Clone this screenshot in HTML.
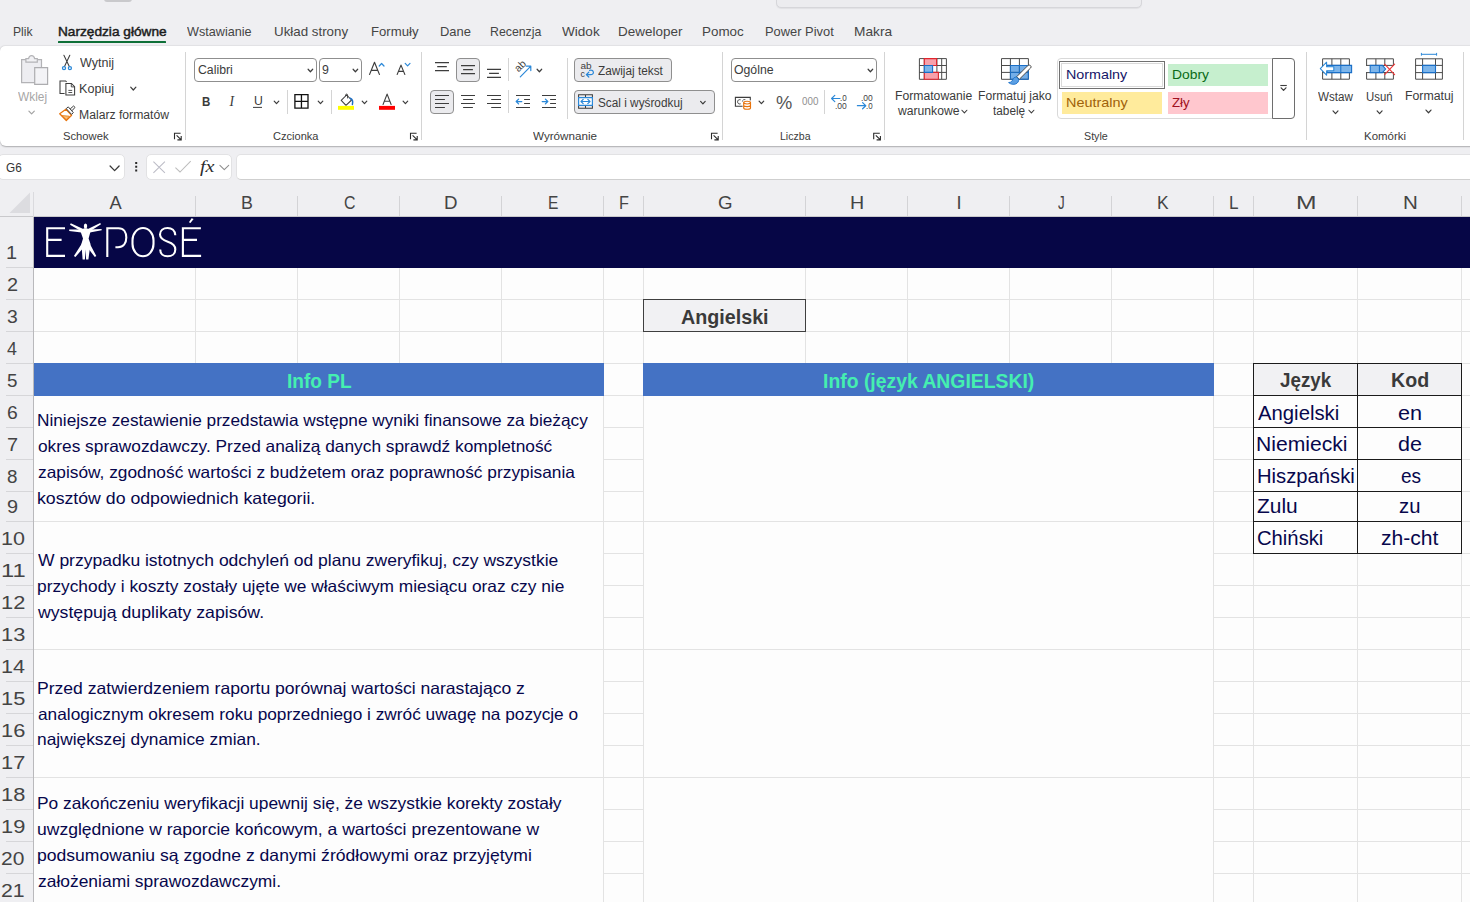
<!DOCTYPE html>
<html><head><meta charset="utf-8"><title>Excel</title>
<style>
html,body{margin:0;padding:0}
body{width:1470px;height:902px;overflow:hidden;position:relative;background:#efeff2;font-family:'Liberation Sans',sans-serif;}
#r{position:absolute;left:0;top:0;width:1470px;height:902px;overflow:hidden}
#r>div,#r>svg,#r>span{position:absolute}
.t{white-space:pre;transform-origin:0 0;display:block}
</style></head><body><div id="r">
<div style="left:104px;top:-2px;width:28px;height:3.5px;background:#c9c9cc;border-radius:0 0 3px 3px;"></div>
<div style="left:776px;top:-10.6px;width:366px;height:19px;background:#ececef;border:1px solid #d6d6da;border-radius:5px;box-sizing:border-box;box-shadow:0 1px 1px rgba(0,0,0,0.06);"></div>
<div style="left:58px;top:40.8px;width:108.4px;height:2.2px;background:#0f7038;border-radius:0.6px;"></div>
<div style="left:0px;top:46.4px;width:1480px;height:99.6px;background:#ffffff;border-radius:5px 0 0 6px;box-shadow:0 0.5px 1.5px rgba(0,0,0,0.28);"></div>
<div style="left:185.4px;top:51.5px;width:1px;height:88.0px;background:#d4d4d4;"></div>
<div style="left:421.4px;top:51.5px;width:1px;height:88.0px;background:#d4d4d4;"></div>
<div style="left:722.4px;top:51.5px;width:1px;height:88.0px;background:#d4d4d4;"></div>
<div style="left:884.4px;top:51.5px;width:1px;height:88.0px;background:#d4d4d4;"></div>
<div style="left:1306px;top:51.5px;width:1px;height:88.0px;background:#d4d4d4;"></div>
<div style="left:1463px;top:51.5px;width:1px;height:88.0px;background:#d4d4d4;"></div>
<div style="left:287.2px;top:90px;width:1px;height:23.599999999999994px;background:#d4d4d4;"></div>
<div style="left:331.2px;top:90px;width:1px;height:23.599999999999994px;background:#d4d4d4;"></div>
<div style="left:508px;top:58.3px;width:1px;height:23.200000000000003px;background:#d4d4d4;"></div>
<div style="left:508px;top:90.3px;width:1px;height:23.200000000000003px;background:#d4d4d4;"></div>
<div style="left:567.4px;top:57.7px;width:1px;height:61.099999999999994px;background:#d4d4d4;"></div>
<div style="left:824.3px;top:90.1px;width:1px;height:23.80000000000001px;background:#d4d4d4;"></div>
<div style="left:194.3px;top:58.2px;width:122.3px;height:23.4px;background:#fff;border:1px solid #8f8f8f;border-radius:4px;box-sizing:border-box;"></div>
<div style="left:319px;top:58.2px;width:42.5px;height:23.4px;background:#fff;border:1px solid #8f8f8f;border-radius:4px;box-sizing:border-box;"></div>
<div style="left:731px;top:58.3px;width:146px;height:23.3px;background:#fff;border:1px solid #8f8f8f;border-radius:4px;box-sizing:border-box;"></div>
<div style="left:456.2px;top:58.2px;width:23.6px;height:23.4px;background:#ebebee;border:1px solid #8f8f8f;border-radius:4px;box-sizing:border-box;"></div>
<div style="left:430px;top:90.2px;width:23.8px;height:23.4px;background:#ebebee;border:1px solid #8f8f8f;border-radius:4px;box-sizing:border-box;"></div>
<div style="left:574.3px;top:58.2px;width:98px;height:23.4px;background:#ebebee;border:1px solid #8f8f8f;border-radius:4px;box-sizing:border-box;"></div>
<div style="left:574.3px;top:90.2px;width:140.4px;height:23.4px;background:#ebebee;border:1px solid #8f8f8f;border-radius:4px;box-sizing:border-box;"></div>
<div style="left:1057px;top:58.3px;width:238.2px;height:61.2px;background:#fff;border:1px solid #d9d9d9;border-radius:4px;box-sizing:border-box;"></div>
<div style="left:1272.2px;top:58.3px;width:23px;height:61.2px;background:#fff;border:1px solid #6e6e6e;border-radius:0 4px 4px 0;box-sizing:border-box;"></div>
<div style="left:1059.3px;top:61.2px;width:105.8px;height:27.6px;background:#fff;border:1px solid #707070;box-sizing:border-box;box-shadow:inset 0 0 0 1px #fff, inset 0 0 0 2px #dadada;"></div>
<div style="left:1168px;top:64px;width:100px;height:22px;background:#c6efce;"></div>
<div style="left:1062px;top:92px;width:100px;height:22px;background:#ffeb9c;"></div>
<div style="left:1168px;top:92px;width:100px;height:22px;background:#ffc7ce;"></div>
<div style="left:-2px;top:154.4px;width:127.2px;height:25.2px;background:#fff;border:1px solid #e2e2e4;border-radius:5px;box-sizing:border-box;"></div>
<div style="left:146.2px;top:154.4px;width:85.6px;height:25.2px;background:#fff;border:1px solid #e2e2e4;border-radius:5px;box-sizing:border-box;"></div>
<div style="left:236.2px;top:154.4px;width:1245px;height:25.2px;background:#fff;border:1px solid #e2e2e4;border-radius:5px;box-sizing:border-box;border-bottom-color:#cfcfcf;"></div>
<div style="left:34px;top:217px;width:1436px;height:685px;background:#fdfdfd;"></div>
<div style="left:34px;top:217px;width:1436px;height:51px;background:#060646;"></div>
<div style="left:0px;top:216px;width:1470px;height:1px;background:#c9c9cc;"></div>
<div style="left:33px;top:192px;width:1px;height:25px;background:#dadade;"></div>
<div style="left:33px;top:217px;width:1px;height:685px;background:#b9b9bc;"></div>
<div style="left:195px;top:196px;width:1px;height:20px;background:#d3d3d6;"></div>
<div style="left:297px;top:196px;width:1px;height:20px;background:#d3d3d6;"></div>
<div style="left:399px;top:196px;width:1px;height:20px;background:#d3d3d6;"></div>
<div style="left:501px;top:196px;width:1px;height:20px;background:#d3d3d6;"></div>
<div style="left:603px;top:196px;width:1px;height:20px;background:#d3d3d6;"></div>
<div style="left:643px;top:196px;width:1px;height:20px;background:#d3d3d6;"></div>
<div style="left:805px;top:196px;width:1px;height:20px;background:#d3d3d6;"></div>
<div style="left:907px;top:196px;width:1px;height:20px;background:#d3d3d6;"></div>
<div style="left:1009px;top:196px;width:1px;height:20px;background:#d3d3d6;"></div>
<div style="left:1111px;top:196px;width:1px;height:20px;background:#d3d3d6;"></div>
<div style="left:1213px;top:196px;width:1px;height:20px;background:#d3d3d6;"></div>
<div style="left:1253px;top:196px;width:1px;height:20px;background:#d3d3d6;"></div>
<div style="left:1357px;top:196px;width:1px;height:20px;background:#d3d3d6;"></div>
<div style="left:1461px;top:196px;width:1px;height:20px;background:#d3d3d6;"></div>
<div style="left:6px;top:267px;width:27px;height:1px;background:#d6d6d9;"></div>
<div style="left:6px;top:299px;width:27px;height:1px;background:#d6d6d9;"></div>
<div style="left:6px;top:331px;width:27px;height:1px;background:#d6d6d9;"></div>
<div style="left:6px;top:363px;width:27px;height:1px;background:#d6d6d9;"></div>
<div style="left:6px;top:395px;width:27px;height:1px;background:#d6d6d9;"></div>
<div style="left:6px;top:427px;width:27px;height:1px;background:#d6d6d9;"></div>
<div style="left:6px;top:459px;width:27px;height:1px;background:#d6d6d9;"></div>
<div style="left:6px;top:491px;width:27px;height:1px;background:#d6d6d9;"></div>
<div style="left:6px;top:521px;width:27px;height:1px;background:#d6d6d9;"></div>
<div style="left:6px;top:553px;width:27px;height:1px;background:#d6d6d9;"></div>
<div style="left:6px;top:585px;width:27px;height:1px;background:#d6d6d9;"></div>
<div style="left:6px;top:617px;width:27px;height:1px;background:#d6d6d9;"></div>
<div style="left:6px;top:649px;width:27px;height:1px;background:#d6d6d9;"></div>
<div style="left:6px;top:681px;width:27px;height:1px;background:#d6d6d9;"></div>
<div style="left:6px;top:713px;width:27px;height:1px;background:#d6d6d9;"></div>
<div style="left:6px;top:745px;width:27px;height:1px;background:#d6d6d9;"></div>
<div style="left:6px;top:777px;width:27px;height:1px;background:#d6d6d9;"></div>
<div style="left:6px;top:809px;width:27px;height:1px;background:#d6d6d9;"></div>
<div style="left:6px;top:841px;width:27px;height:1px;background:#d6d6d9;"></div>
<div style="left:6px;top:873px;width:27px;height:1px;background:#d6d6d9;"></div>
<svg style="left:9px;top:192px" width="22" height="22" viewBox="0 0 22 22"><path d="M21 0.5V21H0.5Z" fill="#dcdce0"/></svg>
<div style="left:34px;top:299px;width:1436px;height:1px;background:#e3e3e3;"></div>
<div style="left:34px;top:331px;width:1436px;height:1px;background:#e3e3e3;"></div>
<div style="left:604px;top:363px;width:39px;height:1px;background:#e3e3e3;"></div>
<div style="left:604px;top:395px;width:39px;height:1px;background:#e3e3e3;"></div>
<div style="left:604px;top:427px;width:39px;height:1px;background:#e3e3e3;"></div>
<div style="left:604px;top:459px;width:39px;height:1px;background:#e3e3e3;"></div>
<div style="left:604px;top:491px;width:39px;height:1px;background:#e3e3e3;"></div>
<div style="left:604px;top:553px;width:39px;height:1px;background:#e3e3e3;"></div>
<div style="left:604px;top:585px;width:39px;height:1px;background:#e3e3e3;"></div>
<div style="left:604px;top:617px;width:39px;height:1px;background:#e3e3e3;"></div>
<div style="left:604px;top:681px;width:39px;height:1px;background:#e3e3e3;"></div>
<div style="left:604px;top:713px;width:39px;height:1px;background:#e3e3e3;"></div>
<div style="left:604px;top:745px;width:39px;height:1px;background:#e3e3e3;"></div>
<div style="left:604px;top:809px;width:39px;height:1px;background:#e3e3e3;"></div>
<div style="left:604px;top:841px;width:39px;height:1px;background:#e3e3e3;"></div>
<div style="left:604px;top:873px;width:39px;height:1px;background:#e3e3e3;"></div>
<div style="left:1214px;top:363px;width:39px;height:1px;background:#e3e3e3;"></div>
<div style="left:1462px;top:363px;width:8px;height:1px;background:#e3e3e3;"></div>
<div style="left:1214px;top:395px;width:39px;height:1px;background:#e3e3e3;"></div>
<div style="left:1462px;top:395px;width:8px;height:1px;background:#e3e3e3;"></div>
<div style="left:1214px;top:427px;width:39px;height:1px;background:#e3e3e3;"></div>
<div style="left:1462px;top:427px;width:8px;height:1px;background:#e3e3e3;"></div>
<div style="left:1214px;top:459px;width:39px;height:1px;background:#e3e3e3;"></div>
<div style="left:1462px;top:459px;width:8px;height:1px;background:#e3e3e3;"></div>
<div style="left:1214px;top:491px;width:39px;height:1px;background:#e3e3e3;"></div>
<div style="left:1462px;top:491px;width:8px;height:1px;background:#e3e3e3;"></div>
<div style="left:1214px;top:553px;width:39px;height:1px;background:#e3e3e3;"></div>
<div style="left:1462px;top:553px;width:8px;height:1px;background:#e3e3e3;"></div>
<div style="left:1214px;top:585px;width:256px;height:1px;background:#e3e3e3;"></div>
<div style="left:1214px;top:617px;width:256px;height:1px;background:#e3e3e3;"></div>
<div style="left:1214px;top:681px;width:256px;height:1px;background:#e3e3e3;"></div>
<div style="left:1214px;top:713px;width:256px;height:1px;background:#e3e3e3;"></div>
<div style="left:1214px;top:745px;width:256px;height:1px;background:#e3e3e3;"></div>
<div style="left:1214px;top:809px;width:256px;height:1px;background:#e3e3e3;"></div>
<div style="left:1214px;top:841px;width:256px;height:1px;background:#e3e3e3;"></div>
<div style="left:1214px;top:873px;width:256px;height:1px;background:#e3e3e3;"></div>
<div style="left:34px;top:521px;width:1436px;height:1px;background:#e3e3e3;"></div>
<div style="left:34px;top:649px;width:1436px;height:1px;background:#e3e3e3;"></div>
<div style="left:34px;top:777px;width:1436px;height:1px;background:#e3e3e3;"></div>
<div style="left:195px;top:268px;width:1px;height:95px;background:#e3e3e3;"></div>
<div style="left:297px;top:268px;width:1px;height:95px;background:#e3e3e3;"></div>
<div style="left:399px;top:268px;width:1px;height:95px;background:#e3e3e3;"></div>
<div style="left:501px;top:268px;width:1px;height:95px;background:#e3e3e3;"></div>
<div style="left:603px;top:268px;width:1px;height:95px;background:#e3e3e3;"></div>
<div style="left:643px;top:268px;width:1px;height:95px;background:#e3e3e3;"></div>
<div style="left:805px;top:268px;width:1px;height:95px;background:#e3e3e3;"></div>
<div style="left:907px;top:268px;width:1px;height:95px;background:#e3e3e3;"></div>
<div style="left:1009px;top:268px;width:1px;height:95px;background:#e3e3e3;"></div>
<div style="left:1111px;top:268px;width:1px;height:95px;background:#e3e3e3;"></div>
<div style="left:1213px;top:268px;width:1px;height:95px;background:#e3e3e3;"></div>
<div style="left:1253px;top:268px;width:1px;height:95px;background:#e3e3e3;"></div>
<div style="left:1357px;top:268px;width:1px;height:95px;background:#e3e3e3;"></div>
<div style="left:1461px;top:268px;width:1px;height:95px;background:#e3e3e3;"></div>
<div style="left:603px;top:396px;width:1px;height:506px;background:#e3e3e3;"></div>
<div style="left:643px;top:396px;width:1px;height:506px;background:#e3e3e3;"></div>
<div style="left:1213px;top:396px;width:1px;height:506px;background:#e3e3e3;"></div>
<div style="left:1253px;top:554px;width:1px;height:348px;background:#e3e3e3;"></div>
<div style="left:1357px;top:554px;width:1px;height:348px;background:#e3e3e3;"></div>
<div style="left:1461px;top:554px;width:1px;height:348px;background:#e3e3e3;"></div>
<div style="left:34px;top:363px;width:570px;height:33px;background:#4472c4;"></div>
<div style="left:643px;top:363px;width:571px;height:33px;background:#4472c4;"></div>
<div style="left:643px;top:299px;width:163px;height:33px;background:#f1f1f3;border:1px solid #3f3f3f;box-sizing:border-box;"></div>
<div style="left:1253px;top:363px;width:209px;height:33px;background:#f1f1f3;"></div>
<div style="left:1253px;top:363px;width:209px;height:1px;background:#1b1b1b;"></div>
<div style="left:1253px;top:395px;width:209px;height:1px;background:#1b1b1b;"></div>
<div style="left:1253px;top:427px;width:209px;height:1px;background:#1b1b1b;"></div>
<div style="left:1253px;top:459px;width:209px;height:1px;background:#1b1b1b;"></div>
<div style="left:1253px;top:491px;width:209px;height:1px;background:#1b1b1b;"></div>
<div style="left:1253px;top:521px;width:209px;height:1px;background:#1b1b1b;"></div>
<div style="left:1253px;top:553px;width:209px;height:1px;background:#1b1b1b;"></div>
<div style="left:1253px;top:363px;width:1px;height:191px;background:#1b1b1b;"></div>
<div style="left:1357px;top:363px;width:1px;height:191px;background:#1b1b1b;"></div>
<div style="left:1461px;top:363px;width:1px;height:191px;background:#1b1b1b;"></div>
<!-- EXPOSE logo -->
<svg style="left:34px;top:217px" width="200" height="51" viewBox="34 217 200 51" fill="none" stroke="#fff" stroke-width="2.1" stroke-linecap="butt" stroke-linejoin="miter">
<path d="M65 228.2H47.2V255.9H65M47.2 239.9H61.6"/>
<g stroke="none" fill="#fff">
<ellipse cx="85.5" cy="225.9" rx="1.7" ry="2.5"/>
<path d="M80.2 230.4L84.2 228.3L86.8 228.3L90.8 230.4L88.6 238.4L90.5 244L88.4 259.4L86.1 259.4L85.5 249.5L84.9 259.4L82.6 259.4L81.4 244L83 238.4Z"/>
<path d="M81.4 232.5L69.2 230.9L69.2 229.5L81.4 229.6ZM89.8 232.5L101.7 230.3L101.6 228.9L89.8 229.6Z"/>
<path d="M81.6 231.6L70 224.7L70.8 223.3L83.8 229.2ZM89.6 231.6L101 224.3L100.2 223L87.4 229.2Z"/>
<path d="M82.2 243L73.9 256L75.4 257L84.6 246.5ZM89.4 243L96.3 256L94.8 257L86.8 246.5Z"/>
</g>
<path d="M107.3 227.2V257M107.3 228.2H118.5C124 228.2 126.3 232.6 126.3 237.6C126.3 242.8 123.5 247.2 118 247.2H115.4"/>
<rect x="132.5" y="228" width="21" height="28.2" rx="10.5" ry="12.2"/>
<path d="M175.3 235.2C175 230.6 171.8 228 167.6 228C163.2 228 160 230.6 160 234.6C160 238.6 163 240.2 167.8 241.8C172.6 243.4 175.3 245.2 175.3 249.4C175.3 253.6 172 256.3 167.6 256.3C163.2 256.3 160.2 253.6 160.2 249.4"/>
<path d="M200.9 228.2H182.9V255.9H201.1M182.9 239.9H197"/>
<path d="M188.9 222.3L191.6 218.3L193.6 219.1L190.5 223Z" fill="#fff" stroke="none"/>
</svg>
<svg style="left:0;top:0" width="1470" height="190" viewBox="0 0 1470 190" fill="none">
<path d="M21.6 59.6H41.5V82.6H21.6Z" fill="#ededf1" stroke="#b3b3b6" stroke-width="1.2"/>
<path d="M25.9 62.2V58.6H28.6C28.9 56.6 30 55.6 31.6 55.6C33.2 55.6 34.3 56.6 34.6 58.6H37.3V62.2Z" fill="#f1f1f4" stroke="#b3b3b6" stroke-width="1.2"/>
<path d="M34.7 67.6H47.6V84.3H34.7Z" fill="#f3f3f6" stroke="#adadb0" stroke-width="1.2"/>
<path d="M28.90 111.10L31.60 113.90L34.30 111.10" stroke="#a3a3a3" stroke-width="1.2" fill="none" stroke-linecap="round" stroke-linejoin="round"/>
<path d="M63.9 55.2L69.2 66.2M69.8 55.2L64.6 66.2" stroke="#3d3d3d" stroke-width="1.05" stroke-linecap="round"/>
<circle cx="64" cy="68.1" r="1.55" stroke="#2b88d8" stroke-width="1.25"/><circle cx="69.9" cy="68.1" r="1.55" stroke="#2b88d8" stroke-width="1.25"/>
<path d="M64.6 93.4H60V80.9H65.6L66.6 81.9" stroke="#3d3d3d" stroke-width="1.05"/>
<path d="M65.9 83.4H71.4L74.6 86.7V95H65.9Z" stroke="#3d3d3d" stroke-width="1.05" fill="#fff"/>
<path d="M71.3 83.6V86.9H74.5" stroke="#3d3d3d" stroke-width="0.9"/>
<path d="M68.40 90.40H72.20M68.40 92.50H72.20" stroke="#3d3d3d" stroke-width="0.9" fill="none" stroke-linecap="butt"/>
<path d="M130.70 87.20L133.30 90.00L135.90 87.20" stroke="#3d3d3d" stroke-width="1.2" fill="none" stroke-linecap="round" stroke-linejoin="round"/>
<path d="M59.7 113.7L65.9 109.3L71.6 115.2L66.3 120.5Z" fill="#fff" stroke="#e8730c" stroke-width="1.25" stroke-linejoin="round"/>
<path d="M62.2 115.6L69.4 116.2L66.3 119.6Z" fill="#f7c27c" stroke="#e8730c" stroke-width="0.8" stroke-linejoin="round"/>
<path d="M66.2 108.6L68.3 106.9L73.3 112.6L71.6 114.4Z" fill="#fff" stroke="#3d3d3d" stroke-width="1"/>
<path d="M70.2 108.9L73.6 106L75 107.4L71.9 110.8Z" fill="#fff" stroke="#3d3d3d" stroke-width="1"/>
<path d="M180.60 133.20H174.50V139.30" stroke="#2a2a2a" stroke-width="1.1" fill="none"/>
<path d="M176.60 135.30L181.00 139.70M181.20 136.10V139.90H177.40" stroke="#2a2a2a" stroke-width="1.1" fill="none"/>
<path d="M308.10 69.25L310.40 71.75L312.70 69.25" stroke="#3d3d3d" stroke-width="1.2" fill="none" stroke-linecap="round" stroke-linejoin="round"/>
<path d="M353.10 69.25L355.40 71.75L357.70 69.25" stroke="#3d3d3d" stroke-width="1.2" fill="none" stroke-linecap="round" stroke-linejoin="round"/>
<path d="M369.4 74.9L374.5 62.3L379.6 74.9M371.3 70.4H377.7" stroke="#3d3d3d" stroke-width="1.15" stroke-linejoin="round"/>
<path d="M379.2 66L381.6 63.5L384 66" stroke="#2b88d8" stroke-width="1.2" stroke-linecap="round" stroke-linejoin="round"/>
<path d="M397 74.9L401 65.1L405 74.9M398.5 71.4H403.5" stroke="#3d3d3d" stroke-width="1.15" stroke-linejoin="round"/>
<path d="M405.2 63.4L407.6 65.9L410 63.4" stroke="#2b88d8" stroke-width="1.2" stroke-linecap="round" stroke-linejoin="round"/>
<path d="M253.00 107.40H262.00" stroke="#3d3d3d" stroke-width="1.0" fill="none" stroke-linecap="butt"/>
<path d="M274.20 101.15L276.50 103.65L278.80 101.15" stroke="#3d3d3d" stroke-width="1.2" fill="none" stroke-linecap="round" stroke-linejoin="round"/>
<path d="M294.9 94.7H308V108.1H294.9ZM301.45 94.7V108.1M294.9 101.4H308" stroke="#111" stroke-width="1.3"/>
<path d="M318.20 101.15L320.50 103.65L322.80 101.15" stroke="#3d3d3d" stroke-width="1.2" fill="none" stroke-linecap="round" stroke-linejoin="round"/>
<path d="M341.2 100.4L346.6 95L351.6 100L346 105.3Z" stroke="#3d3d3d" stroke-width="1.05" stroke-linejoin="round" fill="#fff"/>
<path d="M345.6 96.2V95C345.6 93.8 347.6 93.8 347.6 95V98.4" stroke="#3d3d3d" stroke-width="0.95"/>
<path d="M350.2 98.2C352.4 98.9 353 101.6 352.4 104.4" stroke="#1f6fc4" stroke-width="1.5" stroke-linecap="round"/>
<rect x="338" y="105.9" width="16" height="3.9" fill="#ffff00"/>
<path d="M362.20 101.15L364.50 103.65L366.80 101.15" stroke="#3d3d3d" stroke-width="1.2" fill="none" stroke-linecap="round" stroke-linejoin="round"/>
<path d="M382.9 104.9L387.1 94.1L391.3 104.9M384.4 101.2H389.8" stroke="#3d3d3d" stroke-width="1.15" stroke-linejoin="round"/>
<rect x="379" y="105.9" width="16" height="3.9" fill="#ff0000"/>
<path d="M403.10 101.15L405.40 103.65L407.70 101.15" stroke="#3d3d3d" stroke-width="1.2" fill="none" stroke-linecap="round" stroke-linejoin="round"/>
<path d="M416.60 133.20H410.50V139.30" stroke="#2a2a2a" stroke-width="1.1" fill="none"/>
<path d="M412.60 135.30L417.00 139.70M417.20 136.10V139.90H413.40" stroke="#2a2a2a" stroke-width="1.1" fill="none"/>
<path d="M435.00 62.60H449.00M437.20 66.60H446.80M435.00 70.60H449.00" stroke="#3d3d3d" stroke-width="1.15" fill="none" stroke-linecap="butt"/>
<path d="M461.00 65.60H475.00M463.10 69.60H472.90M461.00 73.60H475.00" stroke="#3d3d3d" stroke-width="1.15" fill="none" stroke-linecap="butt"/>
<path d="M487.00 69.30H501.00M489.10 73.30H498.90M487.00 77.30H501.00" stroke="#3d3d3d" stroke-width="1.15" fill="none" stroke-linecap="butt"/>
<path d="M435.00 95.50H449.00M435.00 99.50H444.90M435.00 103.50H449.00M435.00 107.50H444.90" stroke="#3d3d3d" stroke-width="1.15" fill="none" stroke-linecap="butt"/>
<path d="M461.00 95.50H475.00M463.10 99.50H472.90M461.00 103.50H475.00M463.10 107.50H472.90" stroke="#3d3d3d" stroke-width="1.15" fill="none" stroke-linecap="butt"/>
<path d="M487.00 95.50H501.00M491.20 99.50H501.00M487.00 103.50H501.00M491.20 107.50H501.00" stroke="#3d3d3d" stroke-width="1.15" fill="none" stroke-linecap="butt"/>
<text transform="translate(518.6 72.6) rotate(-45)" font-family="'Liberation Sans',sans-serif" font-size="10.6" fill="#3d3d3d" textLength="11.4" lengthAdjust="spacingAndGlyphs">ab</text>
<path d="M520.3 76.9L530.6 66.4M526.4 66.2H530.8V70.6" stroke="#2b88d8" stroke-width="1.2" stroke-linecap="round" stroke-linejoin="round"/>
<path d="M537.10 69.25L539.40 71.75L541.70 69.25" stroke="#3d3d3d" stroke-width="1.2" fill="none" stroke-linecap="round" stroke-linejoin="round"/>
<path d="M516.00 95.50H530.00M524.10 99.50H530.00M524.10 103.50H530.00M516.00 107.50H530.00" stroke="#3d3d3d" stroke-width="1.15" fill="none" stroke-linecap="butt"/>
<path d="M521.8 101.5H516.3M518.6 99.1L516.2 101.5L518.6 103.9" stroke="#2b88d8" stroke-width="1.25" stroke-linecap="round" stroke-linejoin="round"/>
<path d="M542.00 95.50H556.00M550.10 99.50H556.00M550.10 103.50H556.00M542.00 107.50H556.00" stroke="#3d3d3d" stroke-width="1.15" fill="none" stroke-linecap="butt"/>
<path d="M542.2 101.5H547.7M545.4 99.1L547.8 101.5L545.4 103.9" stroke="#2b88d8" stroke-width="1.25" stroke-linecap="round" stroke-linejoin="round"/>
<text x="580.4" y="69.4" font-family="'Liberation Sans',sans-serif" font-size="8.8" fill="#3d3d3d" textLength="11.2" lengthAdjust="spacingAndGlyphs">ab</text>
<text x="580.4" y="76.5" font-family="'Liberation Sans',sans-serif" font-size="8.8" fill="#3d3d3d">c</text>
<path d="M589.6 70.3C594.2 69.6 594.8 74.6 590.6 74.6H586.4M588.8 72.2L586.3 74.6L588.8 77" stroke="#2b88d8" stroke-width="1.2" stroke-linecap="round" stroke-linejoin="round"/>
<path d="M578.6 94.8H592.4V108.2H578.6ZM585.5 94.8V97.6M585.5 105.4V108.2" stroke="#3d3d3d" stroke-width="1.05"/>
<path d="M578.6 97.7H592.4V105.3H578.6Z" stroke="#2b88d8" stroke-width="1.2" fill="#fff"/>
<path d="M581 101.5H590M583.2 99.3L581 101.5L583.2 103.7M587.8 99.3L590 101.5L587.8 103.7" stroke="#2b88d8" stroke-width="1.2" stroke-linecap="round" stroke-linejoin="round"/>
<path d="M700.60 101.35L702.90 103.85L705.20 101.35" stroke="#3d3d3d" stroke-width="1.2" fill="none" stroke-linecap="round" stroke-linejoin="round"/>
<path d="M717.60 133.20H711.50V139.30" stroke="#2a2a2a" stroke-width="1.1" fill="none"/>
<path d="M713.60 135.30L718.00 139.70M718.20 136.10V139.90H714.40" stroke="#2a2a2a" stroke-width="1.1" fill="none"/>
<path d="M868.10 69.25L870.40 71.75L872.70 69.25" stroke="#3d3d3d" stroke-width="1.2" fill="none" stroke-linecap="round" stroke-linejoin="round"/>
<path d="M735.4 97.4H750.3V106.2H735.4Z" stroke="#3d3d3d" stroke-width="1.1"/>
<path d="M740.6 99.8C738.6 99.2 737.6 100.4 737.6 101.8C737.6 103.2 738.6 104.4 740.6 103.8M745.4 99.8C743.4 99.2 742.4 100.4 742.4 101.8" stroke="#3d3d3d" stroke-width="0.95"/>
<rect x="742.6" y="100.4" width="9" height="9.6" fill="#fff"/>
<path d="M743.7 102.6V108C743.7 109.7 750.5 109.7 750.5 108V102.6M743.7 105.3C743.7 107 750.5 107 750.5 105.3" stroke="#e8730c" stroke-width="1.15"/>
<ellipse cx="747.1" cy="102.6" rx="3.4" ry="1.35" stroke="#e8730c" stroke-width="1.15" fill="#fff"/>
<path d="M759.10 101.15L761.40 103.65L763.70 101.15" stroke="#3d3d3d" stroke-width="1.2" fill="none" stroke-linecap="round" stroke-linejoin="round"/>
<path d="M840 98.5H831.6M834.8 95.4L831.6 98.5L834.8 101.6" stroke="#2b88d8" stroke-width="1.2" stroke-linecap="round" stroke-linejoin="round"/>
<path d="M857.4 105.7H865.8M862.6 102.6L865.8 105.7L862.6 108.8" stroke="#2b88d8" stroke-width="1.2" stroke-linecap="round" stroke-linejoin="round"/>
<path d="M879.80 133.20H873.70V139.30" stroke="#2a2a2a" stroke-width="1.1" fill="none"/>
<path d="M875.80 135.30L880.20 139.70M880.40 136.10V139.90H876.60" stroke="#2a2a2a" stroke-width="1.1" fill="none"/>
<path d="M919.4 58.6H946.4V79.3H919.4ZM919.4 65.5H946.4M919.4 72.4H946.4M924.3 58.6V79.3M936.9 58.6V79.3M941.7 58.6V79.3" stroke="#4a4a4a" stroke-width="1"/>
<path d="M924.3 58.6H936.6V65.5H924.3Z" fill="#f7a1ab" stroke="#e0252d" stroke-width="1.1"/>
<path d="M924.3 72.4H938.4V79.3H924.3Z" fill="#f7a1ab" stroke="#e0252d" stroke-width="1.1"/>
<path d="M924.3 65.5H932.6V72.4H924.3Z" fill="#7db5ea" stroke="#1a6fc8" stroke-width="1.1"/>
<path d="M961.90 110.25L964.40 112.95L966.90 110.25" stroke="#3d3d3d" stroke-width="1.1" fill="none" stroke-linecap="round" stroke-linejoin="round"/>
<path d="M1010.4 65.5H1028.4V79.3H1010.4Z" fill="#74aee8"/>
<path d="M1001.5 58.6H1028.4V79.3H1001.5ZM1001.5 65.5H1028.4M1001.5 72.4H1028.4M1010.4 58.6V79.3M1019.4 58.6V79.3" stroke="#4a4a4a" stroke-width="1"/>
<path d="M1010.4 65.5H1028.4V79.3H1010.4ZM1019.4 65.5V79.3M1010.4 72.4H1028.4" stroke="#1a6fc8" stroke-width="1" fill="none"/>
<path d="M1029.6 65.2C1031 65.6 1031.6 66.8 1030.6 68L1019.4 79.2L1016.6 76.8L1027.6 65.8C1028.2 65.2 1029 65 1029.6 65.2Z" fill="#fff" stroke="#4a4a4a" stroke-width="1"/>
<path d="M1008.6 82.6C1011.6 82.4 1012.4 80.6 1013.2 78.8C1014.2 76.8 1016.4 76.6 1017.8 78C1019.2 79.6 1018.8 81.8 1017 83.2C1014.6 85 1011 84.6 1008.6 82.6Z" fill="#5b9fe3" stroke="#1a6fc8" stroke-width="0.9"/>
<path d="M1028.90 110.25L1031.40 112.95L1033.90 110.25" stroke="#3d3d3d" stroke-width="1.1" fill="none" stroke-linecap="round" stroke-linejoin="round"/>
<path d="M1280.30 85.50H1286.80" stroke="#3d3d3d" stroke-width="1.1" fill="none" stroke-linecap="butt"/>
<path d="M1281.15 87.80L1283.55 90.40L1285.95 87.80" stroke="#3d3d3d" stroke-width="1.2" fill="none" stroke-linecap="round" stroke-linejoin="round"/>
<path d="M1322.6 58.8H1349.4V79.2H1322.6ZM1331.9 58.8V79.2M1340.8 58.8V79.2M1322.6 65.4H1349.4M1322.6 72.6H1349.4" stroke="#4a4a4a" stroke-width="1"/>
<path d="M1327 65.4H1351.6V72.6H1327Z" fill="#7db5ea" stroke="#1a6fc8" stroke-width="1.1"/>
<path d="M1340.8 65.4V72.6" stroke="#1a6fc8" stroke-width="1"/>
<path d="M1320.3 68.7L1326.6 62.2V66.8H1333.8V70.8H1326.6V75.2Z" fill="#fff" stroke="#2b88d8" stroke-width="1.05" stroke-linejoin="round"/>
<path d="M1333.00 110.95L1335.50 113.65L1338.00 110.95" stroke="#3d3d3d" stroke-width="1.2" fill="none" stroke-linecap="round" stroke-linejoin="round"/>
<path d="M1366.6 58.8H1393.4V79.2H1366.6ZM1375.9 58.8V79.2M1384.8 58.8V79.2M1366.6 65.4H1393.4M1366.6 72.6H1393.4" stroke="#4a4a4a" stroke-width="1"/>
<rect x="1366" y="66" width="30" height="6" fill="#fff"/>
<path d="M1370.2 65.4H1382.4L1385.6 69L1382.4 72.6H1370.2Z" fill="#7db5ea" stroke="#1a6fc8" stroke-width="1.1"/>
<path d="M1379.4 65.4V72.6" stroke="#1a6fc8" stroke-width="1"/>
<path d="M1384.6 64.2L1394.6 74.6M1394.6 64.2L1384.6 74.6" stroke="#f03a3a" stroke-width="1.2" stroke-linecap="round"/>
<path d="M1377.10 110.95L1379.60 113.65L1382.10 110.95" stroke="#3d3d3d" stroke-width="1.2" fill="none" stroke-linecap="round" stroke-linejoin="round"/>
<path d="M1415.6 58.8H1442.4V79.2H1415.6ZM1422.6 58.8V79.2M1435.5 58.8V79.2M1415.6 65.4H1442.4M1415.6 72.6H1442.4" stroke="#4a4a4a" stroke-width="1"/>
<path d="M1422.6 65.4H1435.5V72.6H1422.6Z" fill="#7db5ea" stroke="#1a6fc8" stroke-width="1.1"/>
<path d="M1421.4 54.3H1436.6M1421.4 52.9V55.7M1436.6 52.9V55.7" stroke="#2b88d8" stroke-width="1"/>
<path d="M1426.00 110.05L1428.50 112.75L1431.00 110.05" stroke="#3d3d3d" stroke-width="1.2" fill="none" stroke-linecap="round" stroke-linejoin="round"/>
<path d="M110.10 166.00L114.60 170.60L119.10 166.00" stroke="#3a3a3a" stroke-width="1.3" fill="none" stroke-linecap="round" stroke-linejoin="round"/>
<path d="M135.2 162.1h2v2h-2zM135.2 165.8h2v2h-2zM135.2 169.5h2v2h-2z" fill="#2a2a2a"/>
<path d="M153.4 161.6L164.9 172.8M164.9 161.6L153.4 172.8" stroke="#bcbcc6" stroke-width="1.05"/>
<path d="M175.4 167.6L180 172L190.7 161.2" stroke="#bdbdbd" stroke-width="1.05"/>
<path d="M219.90 165.30L224.30 169.70L228.70 165.30" stroke="#8e8e8e" stroke-width="1.05" fill="none" stroke-linecap="round" stroke-linejoin="round"/>
</svg>
<span class="t" style="left:13.03px;top:26.00px;font-size:12.6px;line-height:12.6px;color:#454545;transform:scaleX(0.9662);">Plik</span>
<span class="t" style="left:58.19px;top:26.00px;font-size:12.6px;line-height:12.6px;color:#1c1c1c;transform:scaleX(1.0848);-webkit-text-stroke:0.45px #1c1c1c;">Narzędzia główne</span>
<span class="t" style="left:187.40px;top:26.00px;font-size:12.6px;line-height:12.6px;color:#454545;transform:scaleX(1.0039);">Wstawianie</span>
<span class="t" style="left:274.34px;top:26.00px;font-size:12.6px;line-height:12.6px;color:#454545;transform:scaleX(1.0589);">Układ strony</span>
<span class="t" style="left:371.36px;top:26.00px;font-size:12.6px;line-height:12.6px;color:#454545;transform:scaleX(1.0441);">Formuły</span>
<span class="t" style="left:439.57px;top:26.00px;font-size:12.6px;line-height:12.6px;color:#454545;transform:scaleX(1.0281);">Dane</span>
<span class="t" style="left:489.82px;top:26.00px;font-size:12.6px;line-height:12.6px;color:#454545;transform:scaleX(0.9786);">Recenzja</span>
<span class="t" style="left:562.30px;top:26.00px;font-size:12.6px;line-height:12.6px;color:#454545;transform:scaleX(1.0771);">Widok</span>
<span class="t" style="left:618.13px;top:26.00px;font-size:12.6px;line-height:12.6px;color:#454545;transform:scaleX(1.0695);">Deweloper</span>
<span class="t" style="left:702.44px;top:26.00px;font-size:12.6px;line-height:12.6px;color:#454545;transform:scaleX(1.0649);">Pomoc</span>
<span class="t" style="left:764.68px;top:26.00px;font-size:12.6px;line-height:12.6px;color:#454545;transform:scaleX(1.0227);">Power Pivot</span>
<span class="t" style="left:854.11px;top:26.00px;font-size:12.6px;line-height:12.6px;color:#454545;transform:scaleX(1.0882);">Makra</span>
<span class="t" style="left:17.80px;top:91.00px;font-size:12.0px;line-height:12.0px;color:#a6a6a6;transform:scaleX(0.9895);">Wklej</span>
<span class="t" style="left:80.00px;top:57.00px;font-size:12.0px;line-height:12.0px;color:#3b3b3b;transform:scaleX(1.0425);">Wytnij</span>
<span class="t" style="left:78.95px;top:83.00px;font-size:12.0px;line-height:12.0px;color:#3b3b3b;transform:scaleX(1.0508);">Kopiuj</span>
<span class="t" style="left:78.98px;top:109.00px;font-size:12.0px;line-height:12.0px;color:#3b3b3b;transform:scaleX(1.0154);">Malarz formatów</span>
<span class="t" style="left:63.11px;top:131.00px;font-size:11.5px;line-height:11.5px;color:#3b3b3b;transform:scaleX(0.9773);">Schowek</span>
<span class="t" style="left:197.59px;top:64.00px;font-size:12.0px;line-height:12.0px;color:#3b3b3b;transform:scaleX(1.0229);">Calibri</span>
<span class="t" style="left:321.89px;top:64.00px;font-size:12.0px;line-height:12.0px;color:#3b3b3b;transform:scaleX(1.0261);">9</span>
<span class="t" style="left:272.82px;top:131.00px;font-size:11.5px;line-height:11.5px;color:#3b3b3b;transform:scaleX(0.9626);">Czcionka</span>
<span class="t" style="left:598.11px;top:65.00px;font-size:12.0px;line-height:12.0px;color:#3b3b3b;transform:scaleX(0.9817);">Zawijaj tekst</span>
<span class="t" style="left:598.11px;top:97.00px;font-size:12.0px;line-height:12.0px;color:#3b3b3b;transform:scaleX(0.9829);">Scal i wyśrodkuj</span>
<span class="t" style="left:532.80px;top:131.00px;font-size:11.5px;line-height:11.5px;color:#3b3b3b;transform:scaleX(1.0135);">Wyrównanie</span>
<span class="t" style="left:734.49px;top:64.00px;font-size:12.0px;line-height:12.0px;color:#3b3b3b;transform:scaleX(1.0225);">Ogólne</span>
<span class="t" style="left:780.08px;top:131.00px;font-size:11.5px;line-height:11.5px;color:#3b3b3b;transform:scaleX(0.9178);">Liczba</span>
<span class="t" style="left:894.68px;top:90.00px;font-size:12.0px;line-height:12.0px;color:#3b3b3b;transform:scaleX(1.0161);">Formatowanie</span>
<span class="t" style="left:897.60px;top:105.00px;font-size:12.0px;line-height:12.0px;color:#3b3b3b;transform:scaleX(1.0124);">warunkowe</span>
<span class="t" style="left:977.99px;top:90.00px;font-size:12.0px;line-height:12.0px;color:#3b3b3b;transform:scaleX(1.0119);">Formatuj jako</span>
<span class="t" style="left:993.45px;top:105.00px;font-size:12.0px;line-height:12.0px;color:#3b3b3b;transform:scaleX(0.9844);">tabelę</span>
<span class="t" style="left:1065.90px;top:68.00px;font-size:13px;line-height:13px;color:#161668;transform:scaleX(1.1009);">Normalny</span>
<span class="t" style="left:1171.63px;top:68.00px;font-size:13px;line-height:13px;color:#0a6a16;transform:scaleX(1.0657);">Dobry</span>
<span class="t" style="left:1065.89px;top:96.00px;font-size:13px;line-height:13px;color:#a0620a;transform:scaleX(1.1101);">Neutralny</span>
<span class="t" style="left:1172.19px;top:96.00px;font-size:13px;line-height:13px;color:#a01020;transform:scaleX(1.0209);">Zły</span>
<span class="t" style="left:1084.23px;top:131.00px;font-size:11.5px;line-height:11.5px;color:#3b3b3b;transform:scaleX(0.9306);">Style</span>
<span class="t" style="left:1318.40px;top:91.00px;font-size:12.0px;line-height:12.0px;color:#3b3b3b;transform:scaleX(0.9694);">Wstaw</span>
<span class="t" style="left:1366.45px;top:91.00px;font-size:12.0px;line-height:12.0px;color:#3b3b3b;transform:scaleX(0.9486);">Usuń</span>
<span class="t" style="left:1404.87px;top:90.00px;font-size:12.0px;line-height:12.0px;color:#3b3b3b;transform:scaleX(1.0264);">Formatuj</span>
<span class="t" style="left:1364.00px;top:131.00px;font-size:11.5px;line-height:11.5px;color:#3b3b3b;transform:scaleX(0.9975);">Komórki</span>
<span class="t" style="left:6.20px;top:162.00px;font-size:12.6px;line-height:12.6px;color:#333;transform:scaleX(0.9355);">G6</span>
<span class="t" style="left:109.40px;top:194.00px;font-size:18.3px;line-height:18.3px;color:#444;transform:scaleX(1.0000);">A</span>
<span class="t" style="left:241.19px;top:194.00px;font-size:18.3px;line-height:18.3px;color:#444;transform:scaleX(0.9744);">B</span>
<span class="t" style="left:343.53px;top:194.00px;font-size:18.3px;line-height:18.3px;color:#444;transform:scaleX(0.8696);">C</span>
<span class="t" style="left:444.37px;top:194.00px;font-size:18.3px;line-height:18.3px;color:#444;transform:scaleX(1.0233);">D</span>
<span class="t" style="left:547.88px;top:194.00px;font-size:18.3px;line-height:18.3px;color:#444;transform:scaleX(0.8500);">E</span>
<span class="t" style="left:619.07px;top:194.00px;font-size:18.3px;line-height:18.3px;color:#444;transform:scaleX(0.8889);">F</span>
<span class="t" style="left:718.38px;top:194.00px;font-size:18.3px;line-height:18.3px;color:#444;transform:scaleX(1.0213);">G</span>
<span class="t" style="left:850.29px;top:194.00px;font-size:18.3px;line-height:18.3px;color:#444;transform:scaleX(1.0732);">H</span>
<span class="t" style="left:956.55px;top:194.00px;font-size:18.3px;line-height:18.3px;color:#444;transform:scaleX(1.0000);">I</span>
<span class="t" style="left:1058.47px;top:194.00px;font-size:18.3px;line-height:18.3px;color:#444;transform:scaleX(0.7333);">J</span>
<span class="t" style="left:1156.97px;top:194.00px;font-size:18.3px;line-height:18.3px;color:#444;transform:scaleX(0.9524);">K</span>
<span class="t" style="left:1229.24px;top:194.00px;font-size:18.3px;line-height:18.3px;color:#444;transform:scaleX(0.9375);">L</span>
<span class="t" style="left:1296.13px;top:194.00px;font-size:18.3px;line-height:18.3px;color:#444;transform:scaleX(1.3469);">M</span>
<span class="t" style="left:1402.97px;top:194.00px;font-size:18.3px;line-height:18.3px;color:#444;transform:scaleX(1.1220);">N</span>
<span class="t" style="left:6.36px;top:244.00px;font-size:18.8px;line-height:18.8px;color:#444;transform:scaleX(1.0625);">1</span>
<span class="t" style="left:6.64px;top:276.00px;font-size:18.8px;line-height:18.8px;color:#444;transform:scaleX(1.0588);">2</span>
<span class="t" style="left:6.93px;top:308.00px;font-size:18.8px;line-height:18.8px;color:#444;transform:scaleX(1.0286);">3</span>
<span class="t" style="left:7.23px;top:340.00px;font-size:18.8px;line-height:18.8px;color:#444;transform:scaleX(0.9474);">4</span>
<span class="t" style="left:6.95px;top:372.00px;font-size:18.8px;line-height:18.8px;color:#444;transform:scaleX(1.0000);">5</span>
<span class="t" style="left:6.67px;top:404.00px;font-size:18.8px;line-height:18.8px;color:#444;transform:scaleX(1.0286);">6</span>
<span class="t" style="left:6.64px;top:436.00px;font-size:18.8px;line-height:18.8px;color:#444;transform:scaleX(1.0588);">7</span>
<span class="t" style="left:6.95px;top:468.00px;font-size:18.8px;line-height:18.8px;color:#444;transform:scaleX(1.0000);">8</span>
<span class="t" style="left:6.64px;top:498.00px;font-size:18.8px;line-height:18.8px;color:#444;transform:scaleX(1.0588);">9</span>
<span class="t" style="left:0.73px;top:530.00px;font-size:18.8px;line-height:18.8px;color:#444;transform:scaleX(1.1467);">10</span>
<span class="t" style="left:0.55px;top:562.00px;font-size:18.8px;line-height:18.8px;color:#444;transform:scaleX(1.2647);">11</span>
<span class="t" style="left:0.71px;top:594.00px;font-size:18.8px;line-height:18.8px;color:#444;transform:scaleX(1.1622);">12</span>
<span class="t" style="left:0.71px;top:626.00px;font-size:18.8px;line-height:18.8px;color:#444;transform:scaleX(1.1622);">13</span>
<span class="t" style="left:0.73px;top:658.00px;font-size:18.8px;line-height:18.8px;color:#444;transform:scaleX(1.1467);">14</span>
<span class="t" style="left:0.71px;top:690.00px;font-size:18.8px;line-height:18.8px;color:#444;transform:scaleX(1.1622);">15</span>
<span class="t" style="left:0.71px;top:722.00px;font-size:18.8px;line-height:18.8px;color:#444;transform:scaleX(1.1622);">16</span>
<span class="t" style="left:0.71px;top:754.00px;font-size:18.8px;line-height:18.8px;color:#444;transform:scaleX(1.1622);">17</span>
<span class="t" style="left:0.71px;top:786.00px;font-size:18.8px;line-height:18.8px;color:#444;transform:scaleX(1.1622);">18</span>
<span class="t" style="left:0.71px;top:818.00px;font-size:18.8px;line-height:18.8px;color:#444;transform:scaleX(1.1622);">19</span>
<span class="t" style="left:1.33px;top:850.00px;font-size:18.8px;line-height:18.8px;color:#444;transform:scaleX(1.1169);">20</span>
<span class="t" style="left:1.32px;top:882.00px;font-size:18.8px;line-height:18.8px;color:#444;transform:scaleX(1.1316);">21</span>
<span class="t" style="left:286.91px;top:371.00px;font-size:20px;line-height:20px;color:#45efb0;transform:scaleX(0.9545);font-weight:700;">Info PL</span>
<span class="t" style="left:822.69px;top:371.00px;font-size:20px;line-height:20px;color:#45efb0;transform:scaleX(0.9685);font-weight:700;">Info (język ANGIELSKI)</span>
<span class="t" style="left:681.11px;top:307.00px;font-size:20px;line-height:20px;color:#3a3a3a;transform:scaleX(0.9851);font-weight:700;">Angielski</span>
<span class="t" style="left:36.99px;top:412.00px;font-size:16.5px;line-height:16.5px;color:#07074c;transform:scaleX(1.0445);">Niniejsze zestawienie przedstawia wstępne wyniki finansowe za bieżący</span>
<span class="t" style="left:37.51px;top:438.00px;font-size:16.5px;line-height:16.5px;color:#07074c;transform:scaleX(1.0487);">okres sprawozdawczy. Przed analizą danych sprawdź kompletność</span>
<span class="t" style="left:37.51px;top:464.00px;font-size:16.5px;line-height:16.5px;color:#07074c;transform:scaleX(1.0491);">zapisów, zgodność wartości z budżetem oraz poprawność przypisania</span>
<span class="t" style="left:37.23px;top:490.00px;font-size:16.5px;line-height:16.5px;color:#07074c;transform:scaleX(1.0720);">kosztów do odpowiednich kategorii.</span>
<span class="t" style="left:38.03px;top:552.00px;font-size:16.5px;line-height:16.5px;color:#07074c;transform:scaleX(1.0605);">W przypadku istotnych odchyleń od planu zweryfikuj, czy wszystkie</span>
<span class="t" style="left:37.25px;top:578.00px;font-size:16.5px;line-height:16.5px;color:#07074c;transform:scaleX(1.0494);">przychody i koszty zostały ujęte we właściwym miesiącu oraz czy nie</span>
<span class="t" style="left:38.30px;top:604.00px;font-size:16.5px;line-height:16.5px;color:#07074c;transform:scaleX(1.0716);">występują duplikaty zapisów.</span>
<span class="t" style="left:36.97px;top:680.00px;font-size:16.5px;line-height:16.5px;color:#07074c;transform:scaleX(1.0640);">Przed zatwierdzeniem raportu porównaj wartości narastająco z</span>
<span class="t" style="left:37.52px;top:706.00px;font-size:16.5px;line-height:16.5px;color:#07074c;transform:scaleX(1.0460);">analogicznym okresem roku poprzedniego i zwróć uwagę na pozycje o</span>
<span class="t" style="left:37.25px;top:731.00px;font-size:16.5px;line-height:16.5px;color:#07074c;transform:scaleX(1.0511);">największej dynamice zmian.</span>
<span class="t" style="left:36.99px;top:795.00px;font-size:16.5px;line-height:16.5px;color:#07074c;transform:scaleX(1.0513);">Po zakończeniu weryfikacji upewnij się, że wszystkie korekty zostały</span>
<span class="t" style="left:37.24px;top:821.00px;font-size:16.5px;line-height:16.5px;color:#07074c;transform:scaleX(1.0631);">uwzględnione w raporcie końcowym, a wartości prezentowane w</span>
<span class="t" style="left:37.24px;top:847.00px;font-size:16.5px;line-height:16.5px;color:#07074c;transform:scaleX(1.0644);">podsumowaniu są zgodne z danymi źródłowymi oraz przyjętymi</span>
<span class="t" style="left:37.51px;top:873.00px;font-size:16.5px;line-height:16.5px;color:#07074c;transform:scaleX(1.0561);">założeniami sprawozdawczymi.</span>
<span class="t" style="left:1279.56px;top:371.00px;font-size:19.7px;line-height:19.7px;color:#3a3a3a;transform:scaleX(0.9540);font-weight:700;">Język</span>
<span class="t" style="left:1390.76px;top:371.00px;font-size:19.7px;line-height:19.7px;color:#3a3a3a;transform:scaleX(0.9958);font-weight:700;">Kod</span>
<span class="t" style="left:1258.10px;top:404.00px;font-size:19.7px;line-height:19.7px;color:#07074c;transform:scaleX(1.0310);">Angielski</span>
<span class="t" style="left:1398.08px;top:404.00px;font-size:19.7px;line-height:19.7px;color:#07074c;transform:scaleX(1.0987);">en</span>
<span class="t" style="left:1256.49px;top:435.00px;font-size:19.7px;line-height:19.7px;color:#07074c;transform:scaleX(1.0727);">Niemiecki</span>
<span class="t" style="left:1398.08px;top:435.00px;font-size:19.7px;line-height:19.7px;color:#07074c;transform:scaleX(1.0914);">de</span>
<span class="t" style="left:1256.56px;top:467.00px;font-size:19.7px;line-height:19.7px;color:#07074c;transform:scaleX(1.0276);">Hiszpański</span>
<span class="t" style="left:1400.58px;top:467.00px;font-size:19.7px;line-height:19.7px;color:#07074c;transform:scaleX(0.9662);">es</span>
<span class="t" style="left:1257.17px;top:497.00px;font-size:19.7px;line-height:19.7px;color:#07074c;transform:scaleX(1.0630);">Zulu</span>
<span class="t" style="left:1399.33px;top:497.00px;font-size:19.7px;line-height:19.7px;color:#07074c;transform:scaleX(1.0293);">zu</span>
<span class="t" style="left:1257.07px;top:529.00px;font-size:19.7px;line-height:19.7px;color:#07074c;transform:scaleX(1.0281);">Chiński</span>
<span class="t" style="left:1381.20px;top:529.00px;font-size:19.7px;line-height:19.7px;color:#07074c;transform:scaleX(1.0711);">zh-cht</span>
<span class="t" style="left:202.04px;top:95.00px;font-size:13.4px;line-height:13.4px;color:#3b3b3b;transform:scaleX(0.8625);font-weight:700;">B</span>
<span class="t" style="left:229.60px;top:95.00px;font-size:13.6px;line-height:13.6px;color:#3b3b3b;transform:scaleX(1.0000);font-style:italic;font-family:'Liberation Serif', serif;">I</span>
<span class="t" style="left:253.51px;top:95.00px;font-size:12.4px;line-height:12.4px;color:#3b3b3b;transform:scaleX(0.9857);">U</span>
<span class="t" style="left:776.16px;top:94.00px;font-size:18.6px;line-height:18.6px;color:#555;transform:scaleX(0.9836);">%</span>
<span class="t" style="left:801.93px;top:97.00px;font-size:10.4px;line-height:10.4px;color:#8f8f8f;transform:scaleX(0.9455);">000</span>
<span class="t" style="left:839.57px;top:94.00px;font-size:8.4px;line-height:8.4px;color:#444;transform:scaleX(0.9667);">.0</span>
<span class="t" style="left:834.64px;top:102.00px;font-size:8.4px;line-height:8.4px;color:#444;transform:scaleX(1.0190);">.00</span>
<span class="t" style="left:860.84px;top:94.00px;font-size:8.4px;line-height:8.4px;color:#444;transform:scaleX(1.0095);">.00</span>
<span class="t" style="left:865.79px;top:102.00px;font-size:8.4px;line-height:8.4px;color:#444;transform:scaleX(0.9500);">.0</span>
<span class="t" style="left:200.11px;top:158.00px;font-size:17.4px;line-height:17.4px;color:#2c2c2c;transform:scaleX(1.1510);font-style:italic;font-family:'Liberation Serif', serif;">fx</span>
</div></body></html>
